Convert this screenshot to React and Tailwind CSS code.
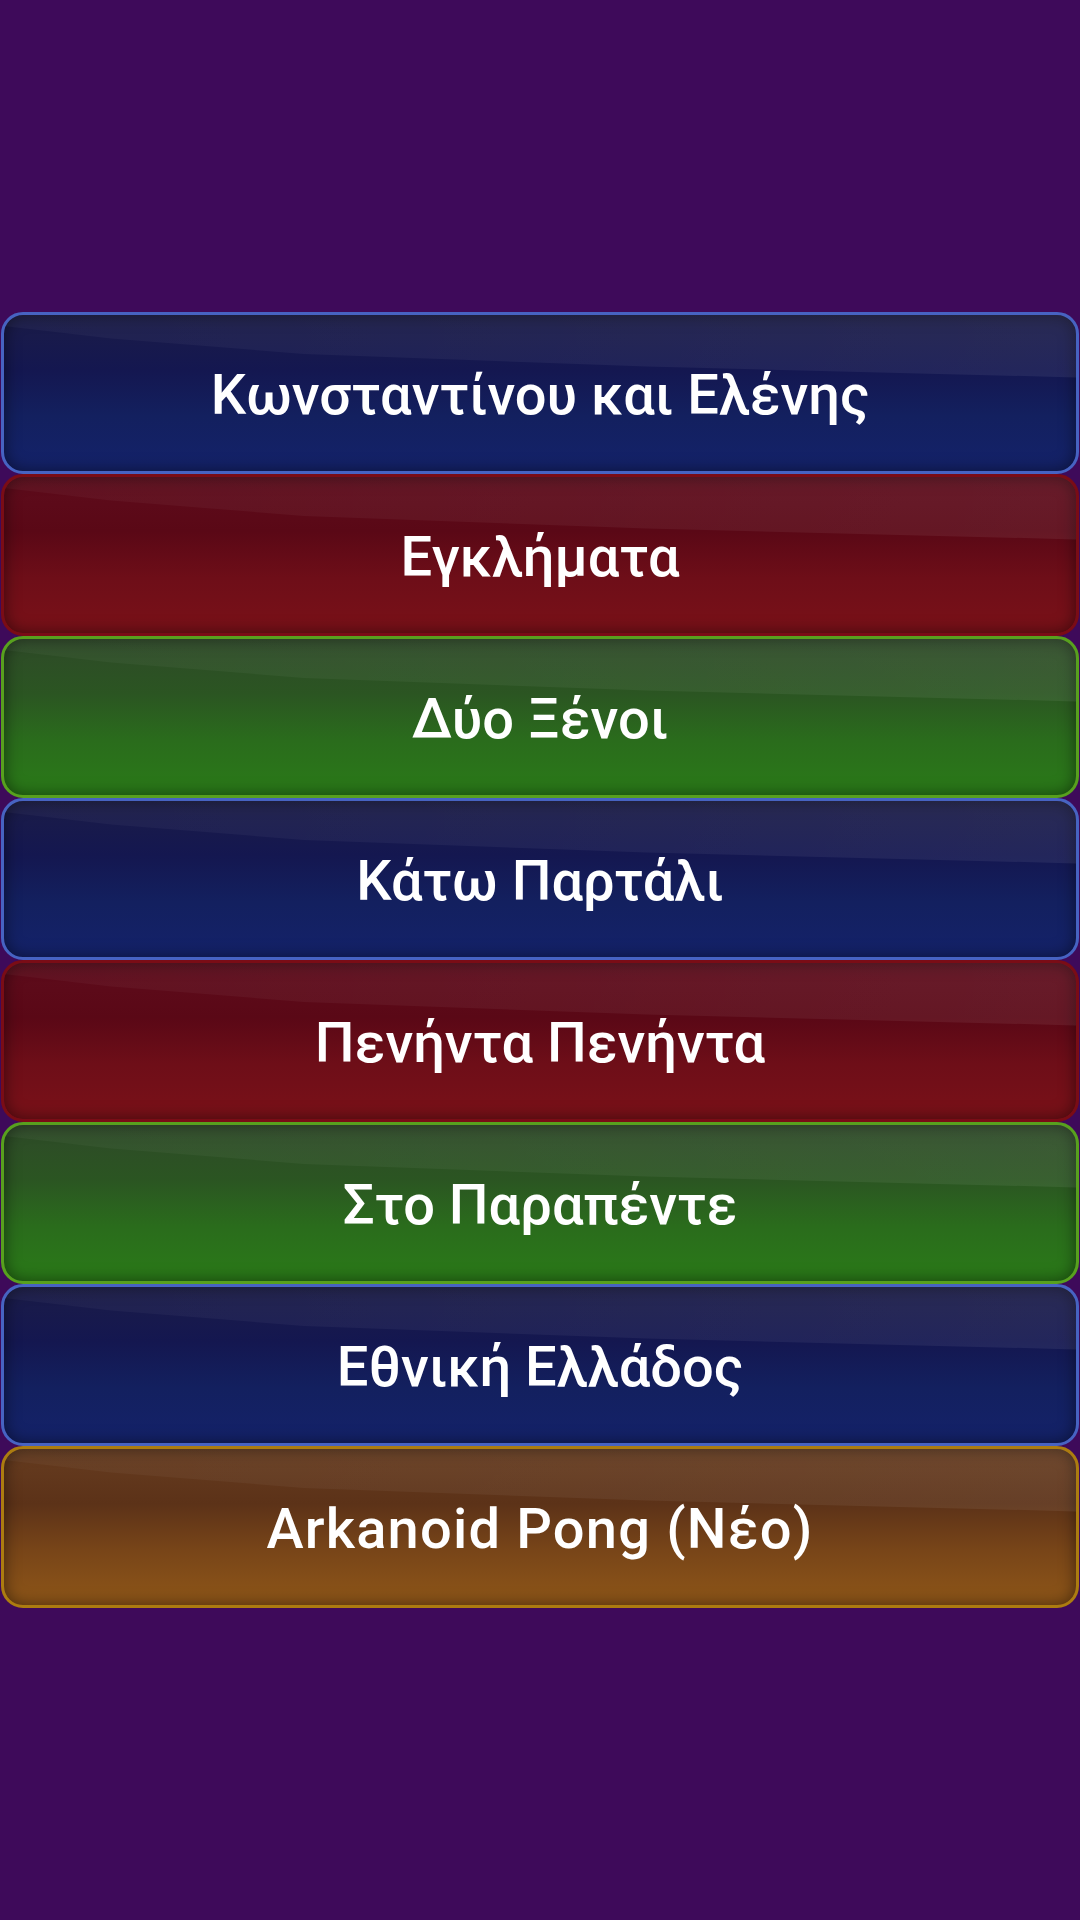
import React from 'react';

// Lista de categorías del juego
const ITEMS = [
  { label: 'Κωνσταντίνου και Ελένης', tone: 'blue' },
  { label: 'Εγκλήματα', tone: 'red' },
  { label: 'Δύο Ξένοι', tone: 'green' },
  { label: 'Κάτω Παρτάλι', tone: 'blue' },
  { label: 'Πενήντα Πενήντα', tone: 'red' },
  { label: 'Στο Παραπέντε', tone: 'green' },
  { label: 'Εθνική Ελλάδος', tone: 'blue' },
  { label: 'Arkanoid Pong (Νέο)', tone: 'orange', extra: 'tracking-[1.2px]' },
];

const TONES = {
  blue: 'border-[#4763c2] bg-[linear-gradient(180deg,#1b1c48_0%,#141750_35%,#13205f_65%,#14226a_100%)]',
  red: 'border-[#7a0c16] bg-[linear-gradient(180deg,#5e0c1c_0%,#5a0816_35%,#6e0e18_65%,#7a1118_100%)]',
  green: 'border-[#58a01e] bg-[linear-gradient(180deg,#2e4a28_0%,#2b5522_35%,#2a6c1c_65%,#2a7a18_100%)]',
  orange: 'border-[#ac7c10] bg-[linear-gradient(180deg,#663c20_0%,#5c3218_35%,#784518_65%,#8e5618_100%)]',
};

const MenuButton = ({ label, tone, extra = '' }) => (
  <div
    className={`relative h-[162px] mx-[1px] rounded-[22px] border-[3px] overflow-hidden flex items-center justify-center shadow-[inset_0_0_16px_rgba(0,0,0,0.5)] ${TONES[tone]}`}
  >
    {/* Brillo curvo superior */}
    <div className="absolute inset-0 bg-[linear-gradient(90deg,rgba(255,255,255,0.03),rgba(255,255,255,0.065))] [clip-path:polygon(0_0,100%_0,100%_40%,60%_33%,28%_25%,10%_15%,0_7%)]" />
    <span className={`relative pt-[4px] text-white text-[56px] font-medium leading-none font-['Roboto',sans-serif] ${extra}`}>
      {label}
    </span>
  </div>
);

const App = () => {
  return (
    <div className="min-h-[1920px] w-[1080px] bg-[#3e0a5a] pt-[312px] font-['Roboto',sans-serif]">
      <div className="flex flex-col">
        {ITEMS.map((item, i) => (
          <MenuButton key={i} label={item.label} tone={item.tone} extra={item.extra} />
        ))}
      </div>
    </div>
  );
};

export default App;
